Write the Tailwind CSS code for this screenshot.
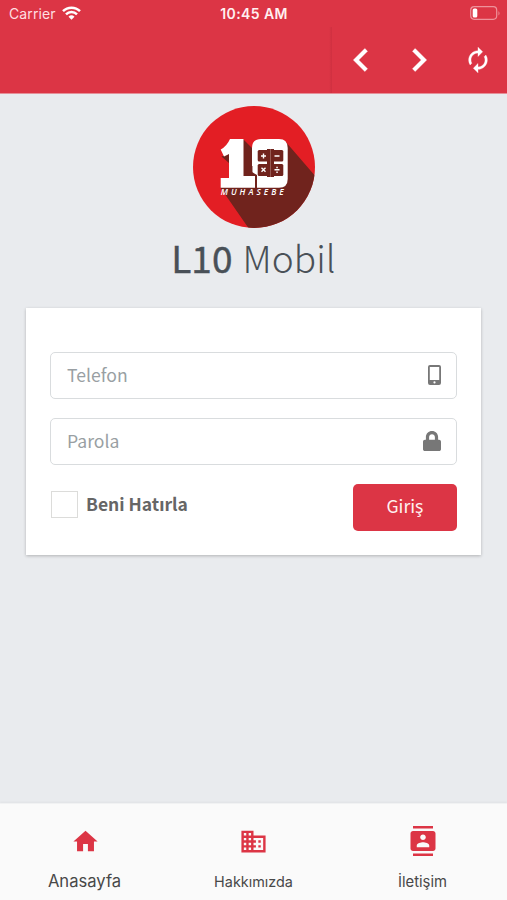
<!DOCTYPE html>
<html lang="tr">
<head>
<meta charset="utf-8">
<title>L10 Mobil</title>
<script src="https://cdn.jsdelivr.net/npm/@tailwindcss/browser@4"></script>
</head>
<body class="flex h-[900px] w-[507px] flex-col overflow-hidden bg-[#e9ebee] font-['Inter',sans-serif]">
  <header class="h-[94px] shrink-0 border-b border-[#e58f98] bg-[#dc3545] text-white">
    <div class="grid h-[27px] grid-cols-[1fr_auto_1fr] items-center pr-[6px] pl-[7px] text-[13px]">
      <div class="flex items-center gap-[6px] pl-[2px] text-[#ffdfe1]"><span class="text-[14px] tracking-[0.1px]">Carrier</span>
        <svg class="mb-px h-[14px] w-[19px]" viewBox="0 0 19 14" fill="none" stroke="#fff" stroke-width="2.5"><path d="M1 5.2a12 12 0 0 1 17 0M4 8.3a7.8 7.8 0 0 1 11 0"/><path d="M9.5 13.7 6.5 10.8a4.3 4.3 0 0 1 6 0z" fill="#fff" stroke="none"/></svg>
      </div>
      <div class="text-center text-[14px] font-semibold tracking-[0.4px] whitespace-nowrap text-[#fff0f0]">10:45 AM</div>
      <svg class="mb-px h-[14px] w-[31px] justify-self-end" viewBox="0 0 31 14"><rect x=".7" y=".7" width="26" height="12.6" rx="3.5" fill="none" stroke="#ee929b" stroke-width="1.2"/><path d="M28.5 5v4.5q2-2.2 0-4.5" fill="#ee929b"/><rect x="2.7" y="2.5" width="4.6" height="9" rx="1.5" fill="#fff"/></svg>
    </div>
    <div class="flex h-[66px] justify-end">
      <div class="w-[3px] bg-linear-to-r from-[#dc3545] to-[#cf3040]"></div>
      <nav class="flex w-[175px] items-center">
        <div class="flex w-[58px] justify-center"><svg class="h-[46px] w-[46px]" viewBox="0 0 24 24" fill="#fff"><path d="M15.41 7.41 14 6l-6 6 6 6 1.41-1.41L10.83 12z" stroke="#fff" stroke-width=".2"/></svg></div>
        <div class="flex w-[58px] justify-center"><svg class="h-[46px] w-[46px]" viewBox="0 0 24 24" fill="#fff"><path d="M10 6 8.59 7.41 13.17 12l-4.58 4.59L10 18l6-6z" stroke="#fff" stroke-width=".2"/></svg></div>
        <div class="flex w-[59px] justify-center"><svg class="h-[28px] w-[28px]" viewBox="0 0 24 24" fill="#fff" stroke="#fff" stroke-width=".3"><path d="M12 6v3l4-4-4-4v3c-4.42 0-8 3.58-8 8 0 1.57.46 3.03 1.24 4.26L6.7 14.8A5.87 5.87 0 0 1 6 12c0-3.31 2.69-6 6-6zm6.76 1.74L17.3 9.2c.44.84.7 1.79.7 2.8 0 3.31-2.69 6-6 6v-3l-4 4 4 4v-3c4.42 0 8-3.58 8-8 0-1.57-.46-3.03-1.24-4.26z"/></svg></div>
      </nav>
    </div>
  </header>

  <main class="flex grow flex-col items-center pt-[12px] font-['Noto_Sans_CJK_JP','Noto_Sans',sans-serif]">
    <svg class="h-[122px] w-[122px] shrink-0" viewBox="0 0 122 122">
      <defs><clipPath id="disc"><circle cx="61" cy="61" r="61"/></clipPath></defs>
      <circle cx="61" cy="61" r="61" fill="#e31e24"/>
      <g clip-path="url(#disc)"><path d="M50 33 60 43 92 35 130 79V130H61L27.7 82 36 44z" fill="#70231d"/><path d="M28 46 36 56V73H28z" fill="#e31e24"/><path d="M28.5 50.5 36 48V57z" fill="#70231d"/></g>
      <path d="M37 33H50.5V70H62V81.7H27.7V72H36V48L31 50.5 27.7 43.5Q34 40 37 33z" fill="#fff"/>
      <path d="M68 33H86Q94.7 33 94.7 42V73Q94.7 81.7 86 81.7H64V69L59 66V42Q59 33 68 33z" fill="#fff"/>
      <path d="M59 60V69.5H63.3V79" fill="none" stroke="#70231d" stroke-width=".9"/>
      <g fill="#70231d"><rect x="64.7" y="44" width="12" height="11.5" rx="1.5"/><rect x="78" y="44" width="12.3" height="11.5" rx="1.5"/><rect x="64.7" y="58" width="12" height="12" rx="1.5"/><rect x="78" y="58" width="12.3" height="12" rx="1.5"/><path d="M74 43h7v28h-7z"/></g>
      <path d="M77.5 43v28" stroke="#a8736c" stroke-width=".7"/>
      <path d="M68 50h5M70.5 47.5v5M81.5 50h5M68.5 61.8l4 4M72.5 61.8l-4 4M81.5 63.8h5" stroke="#fff" stroke-width="1.4"/><path d="M83.3 60.7h1.5v1.5h-1.500zM83.3 65.5h1.500V67h-1.500z" fill="#fff"/>
      <text x="27.7" y="89.3" textLength="63" fill="#fff" font-family="Open Sans, sans-serif" font-size="8.4" font-weight="600" font-style="italic">MUHASEBE</text>
    </svg>
    <h1 class="mt-px flex h-[56px] items-center gap-[10px] text-[37px] leading-none whitespace-nowrap text-[#495057]"><span class="font-normal [-webkit-text-stroke:0.4px_#495057]">L10</span><span class="font-light tracking-[0.1px]">Mobil</span></h1>
    <section class="mt-[23px] flex h-[247px] w-[455px] flex-col bg-white px-[24px] pt-[44px] shadow-[0_1px_3px_rgba(0,0,0,.24)]">
      <div class="flex h-[47px] w-[407px] items-center justify-between rounded-[5px] border-[1.5px] border-[#d9dcde] pr-[15px] pl-[16px] text-[17.6px] text-[#999fa3]"><span class="pb-px">Telefon</span>
        <svg class="mb-[2px] h-[20px] w-[13px]" viewBox="0 0 13 20"><path fill="#777" fill-rule="evenodd" d="M2 0h9a2 2 0 0 1 2 2v16a2 2 0 0 1-2 2H2a2 2 0 0 1-2-2V2a2 2 0 0 1 2-2zm-.2 2v13h9.400V2zm4.700 14.300a1.100 1.100 0 1 0 0 2.200 1.100 1.100 0 0 0 0-2.200z"/></svg>
      </div>
      <div class="mt-[19px] flex h-[47px] w-[407px] items-center justify-between rounded-[5px] border-[1.5px] border-[#d9dcde] pr-[15px] pl-[16px] text-[17.6px] text-[#999fa3]"><span class="pb-px">Parola</span>
        <svg class="mb-[1px] h-[20px] w-[18px]" viewBox="0 0 448 512" preserveAspectRatio="none"><path fill="#777" d="M400 224h-24v-72C376 68.200 307.800 0 224 0S72 68.200 72 152v72H48c-26.500 0-48 21.500-48 48v192c0 26.500 21.500 48 48 48h352c26.500 0 48-21.500 48-48V272c0-26.500-21.500-48-48-48zm-104 0H152v-72c0-39.700 32.300-72 72-72s72 32.300 72 72v72z"/></svg>
      </div>
      <div class="mt-[19px] flex w-[407px] justify-between">
        <label class="flex h-[41px] items-center gap-[8px] pl-px text-[17.5px] font-bold text-[#666]"><span class="h-[27px] w-[27px] border-[1.5px] border-[#dcdcda]"></span><span>Beni Hatırla</span></label>
        <button class="h-[47px] w-[104px] rounded-[5px] bg-[#dc3545] pb-[2px] text-[17.6px] text-[#fff0f0]">Giriş</button>
      </div>
    </section>
  </main>

  <footer class="grid h-[97px] shrink-0 grid-cols-3 border-t border-[#f1f2f3] bg-[#fafafa] text-[#484848] shadow-[0_-1px_2px_rgba(0,0,0,.04)]">
    <div class="flex flex-col items-center pt-[23px]"><svg class="ml-px h-[29px] w-[29px]" viewBox="0 0 24 24" fill="#dc3545"><path d="M10 20v-6h4v6h5v-8h3L12 3 2 12h3v8z"/></svg><span class="mt-[13px] text-[16.6px] leading-[24px]">Anasayfa</span></div>
    <div class="flex flex-col items-center pt-[23px]"><svg class="h-[29px] w-[29px]" viewBox="0 0 24 24" fill="#dc3545"><path d="M12 7V3H2v18h20V7H12zM6 19H4v-2h2v2zm0-4H4v-2h2v2zm0-4H4V9h2v2zm0-4H4V5h2v2zm4 12H8v-2h2v2zm0-4H8v-2h2v2zm0-4H8V9h2v2zm0-4H8V5h2v2zm10 12h-8v-2h2v-2h-2v-2h2v-2h-2V9h8v10zm-2-8h-2v2h2v-2zm0 4h-2v2h2v-2z"/></svg><span class="mt-[14px] text-[14.4px] leading-[24px]">Hakkımızda</span></div>
    <div class="flex flex-col items-center pt-[22px]"><svg class="h-[30px] w-[30px]" viewBox="0 0 24 24" fill="#dc3545"><path d="M20 0H4v2h16V0zM4 24h16v-2H4v2zM20 4H4c-1.1 0-2 .9-2 2v12c0 1.1.9 2 2 2h16c1.1 0 2-.9 2-2V6c0-1.1-.9-2-2-2zm-8 2.75c1.24 0 2.25 1.01 2.25 2.25s-1.01 2.25-2.25 2.25S9.75 10.24 9.75 9 10.76 6.75 12 6.75zM17 17H7v-1.5c0-1.67 3.33-2.5 5-2.5s5 .83 5 2.5V17z"/></svg><span class="mt-[14px] text-[14.8px] leading-[24px]">İletişim</span></div>
  </footer>
</body>
</html>
